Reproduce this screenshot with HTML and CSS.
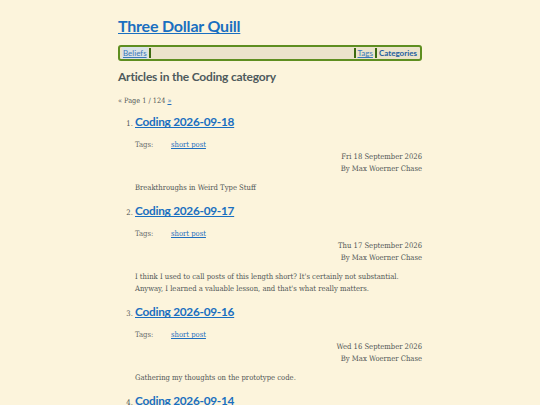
FILE: index.html
```html
<!DOCTYPE html>
<html>
<head>
<meta charset="utf-8">
<link rel="stylesheet" href="styles.css">
</head>
<body>
<div class="page">
  <h1 class="site-title"><a href="#">Three Dollar Quill</a></h1>
  <nav class="nav">
    <a href="#" class="nav-link current">Beliefs</a>
    <span class="sep"></span>
    <span class="spacer"></span>
    <span class="sep"></span>
    <a href="#" class="nav-link">Tags</a>
    <span class="sep"></span>
    <a href="#" class="nav-link strong">Categories</a>
  </nav>
  <h2 class="cat-title">Articles in the Coding category</h2>
  <p class="pager">« Page 1 / 124 <a href="#">»</a></p>
  <ol class="articles">
    <li class="article">
      <h3 class="a-title"><a href="#">Coding 2026-09-18</a></h3>
      <div class="tags"><span class="tags-label">Tags:</span><a href="#" class="tag">short post</a></div>
      <div class="meta"><div>Fri 18 September 2026</div><div>By Max Woerner Chase</div></div>
      <p class="summary">Breakthroughs in Weird Type Stuff</p>
    </li>
    <li class="article">
      <h3 class="a-title"><a href="#">Coding 2026-09-17</a></h3>
      <div class="tags"><span class="tags-label">Tags:</span><a href="#" class="tag">short post</a></div>
      <div class="meta"><div>Thu 17 September 2026</div><div>By Max Woerner Chase</div></div>
      <p class="summary">I think I used to call posts of this length short? It's certainly not substantial. Anyway, I learned a valuable lesson, and that's what really matters.</p>
    </li>
    <li class="article">
      <h3 class="a-title"><a href="#">Coding 2026-09-16</a></h3>
      <div class="tags"><span class="tags-label">Tags:</span><a href="#" class="tag">short post</a></div>
      <div class="meta"><div>Wed 16 September 2026</div><div>By Max Woerner Chase</div></div>
      <p class="summary">Gathering my thoughts on the prototype code.</p>
    </li>
    <li class="article">
      <h3 class="a-title"><a href="#">Coding 2026-09-14</a></h3>
      <div class="tags"><span class="tags-label">Tags:</span><a href="#" class="tag">short post</a></div>
    </li>
  </ol>
</div>
</body>
</html>
```
FILE: styles.css
```css
html, body {
  margin: 0;
  padding: 0;
  background: #fcf4dc;
}
body {
  font-family: "DejaVu Serif Condensed", "DejaVu Serif", serif;
  font-size: 7.6px;
  color: #505656;
  line-height: 12px;
}
a { color: #1f6fbf; text-decoration-skip-ink: none; }
.page {
  width: 304px;
  margin: 0 auto;
  padding-top: 15px;
}
.site-title {
  margin: 0;
  font-family: Lato, sans-serif;
  font-size: 16px;
  font-weight: 700;
  line-height: 22px;
  letter-spacing: -0.2px;
}
.site-title a { color: #1a6fc0; }
.nav {
  margin-top: 8px;
  display: flex;
  align-items: stretch;
  height: 12px;
  border: 2px solid #5e8e20;
  border-radius: 3px;
  background: #ebe3cb;
  padding: 0 2px;
  font-family: Lato, sans-serif;
  font-size: 8px;
  line-height: 12px;
}
.nav-link {
  padding: 0 1px;
  color: #3a78b8;
}
.nav-link.current { background: #d9e2e6; }
.nav-link.strong { font-weight: 700; text-decoration: none; color: #245e9e; }
.sep {
  width: 2px;
  background: #3c6a10;
  margin: 1px 1px;
}
.spacer { flex: 1; }
.cat-title {
  margin: 7px 0 0;
  font-family: Lato, sans-serif;
  font-size: 12px;
  font-weight: 700;
  line-height: 18px;
  color: #4e5a5c;
  letter-spacing: -0.2px;
}
.pager {
  margin: 9px 0 0;
  font-size: 7.3px;
}
.articles {
  margin: 6px 0 0;
  padding-left: 17px;
}
.article::marker {
  font-size: 7.6px;
}
.a-title {
  margin: 0;
  font-family: Lato, sans-serif;
  font-size: 11.8px;
  font-weight: 700;
  line-height: 18px;
  letter-spacing: -0.25px;
}
.a-title a { color: #1a6fc0; }
.tags {
  margin-top: 8px;
  display: flex;
}
.tags-label { width: 36px; color: #666a6a; }
.tag { white-space: nowrap; }
.meta {
  text-align: right;
}
.summary {
  margin: 7px 0 8px;
}
```
